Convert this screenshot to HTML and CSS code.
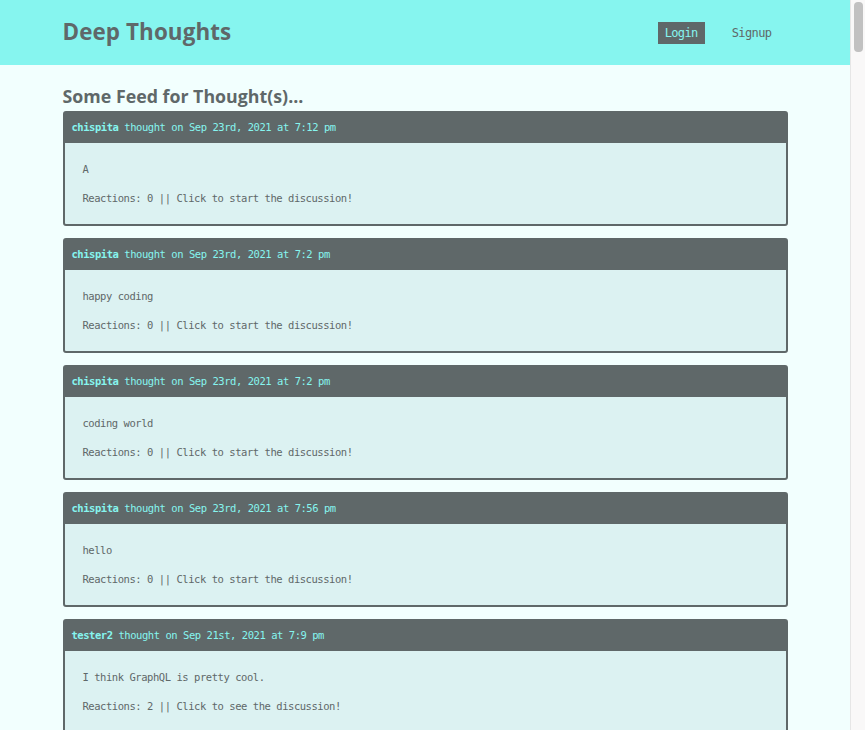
FILE: index.html
```html
<!DOCTYPE html>
<html lang="en">
<head>
<meta charset="utf-8">
<title>Deep Thoughts</title>
<link rel="stylesheet" href="styles.css">
</head>
<body>
<div class="page">
<header class="site-header">
  <div class="header-inner">
    <h1 class="brand">Deep Thoughts</h1>
    <nav class="nav">
      <a class="nav-link nav-active" href="#">Login</a>
      <a class="nav-link" href="#">Signup</a>
    </nav>
  </div>
</header>
<main class="main">
  <h2 class="feed-title">Some Feed for Thought(s)...</h2>
  <div class="card">
    <div class="card-head"><span class="user">chispita</span> thought on Sep 23rd, 2021 at 7:12 pm</div>
    <div class="card-body"><p>A</p><p>Reactions: 0 || Click to start the discussion!</p></div>
  </div>
  <div class="card">
    <div class="card-head"><span class="user">chispita</span> thought on Sep 23rd, 2021 at 7:2 pm</div>
    <div class="card-body"><p>happy coding</p><p>Reactions: 0 || Click to start the discussion!</p></div>
  </div>
  <div class="card">
    <div class="card-head"><span class="user">chispita</span> thought on Sep 23rd, 2021 at 7:2 pm</div>
    <div class="card-body"><p>coding world</p><p>Reactions: 0 || Click to start the discussion!</p></div>
  </div>
  <div class="card">
    <div class="card-head"><span class="user">chispita</span> thought on Sep 23rd, 2021 at 7:56 pm</div>
    <div class="card-body"><p>hello</p><p>Reactions: 0 || Click to start the discussion!</p></div>
  </div>
  <div class="card">
    <div class="card-head"><span class="user">tester2</span> thought on Sep 21st, 2021 at 7:9 pm</div>
    <div class="card-body"><p>I think GraphQL is pretty cool.</p><p>Reactions: 2 || Click to see the discussion!</p></div>
  </div>
  <div class="card">
    <div class="card-head"><span class="user">tester2</span> thought on Sep 21st, 2021 at 7:5 pm</div>
    <div class="card-body"><p>Hello world</p><p>Reactions: 0 || Click to start the discussion!</p></div>
  </div>
</main>
</div>
<div class="scrollbar" aria-hidden="true"><div class="scroll-thumb"></div></div>
</body>
</html>
```
FILE: styles.css
```css
html, body {
  margin: 0;
  padding: 0;
}
body {
  background: #f2fffe;
  color: #5f6869;
  font-family: "Open Sans", "Noto Sans", sans-serif;
}
.page {
  margin-right: 15px;
}
.scrollbar {
  position: fixed;
  top: 0;
  right: 0;
  bottom: 0;
  width: 14px;
  background: #f9f8f8;
  border-left: 1px solid #e6e6e6;
}
.scroll-thumb {
  margin: 2px 2px 0 3px;
  height: 50px;
  border-radius: 4px;
  background: #c1c1c1;
}
.site-header {
  background: #86f5ef;
  height: 65px;
}
.header-inner {
  width: 725px;
  margin: 0 auto;
  height: 65px;
  display: flex;
  align-items: center;
  justify-content: space-between;
}
.brand {
  margin: 0;
  font-size: 22.4px;
  font-weight: 700;
  color: #5f6869;
  letter-spacing: 0.1px;
  position: relative;
  top: -1px;
}
.nav {
  display: flex;
  align-items: center;
  gap: 21px;
  margin-right: 10px;
}
.nav-link {
  font-family: "DejaVu Sans Mono", monospace;
  font-size: 12px;
  letter-spacing: -0.6px;
  color: #5f6869;
  text-decoration: none;
  padding: 0 6px;
  height: 22px;
  line-height: 22px;
  display: block;
}
.nav-active {
  background: #5f6869;
  color: #86f5ef;
  padding: 0 7px;
}
.main {
  width: 725px;
  margin: 0 auto;
  padding-top: 20px;
}
.feed-title {
  margin: 0;
  font-size: 17.8px;
  font-weight: 700;
  height: 26px;
  line-height: 22px;
  color: #5f6869;
}
.card {
  border: 2px solid #5f6869;
  border-radius: 3px;
  background: #dcf2f2;
  margin-bottom: 12px;
  font-family: "DejaVu Sans Mono", monospace;
  font-size: 10.5px;
  letter-spacing: -0.45px;
}
.card-head {
  background: #5f6869;
  color: #86f5ef;
  height: 30px;
  line-height: 28px;
  padding: 0 7px;
}
.user {
  font-weight: 700;
}
.card-body {
  padding: 19px 18px 19px 18px;
  color: #5f6869;
}
.card-body p {
  margin: 0;
  line-height: 14px;
}
.card-body p + p {
  margin-top: 15px;
}
```
